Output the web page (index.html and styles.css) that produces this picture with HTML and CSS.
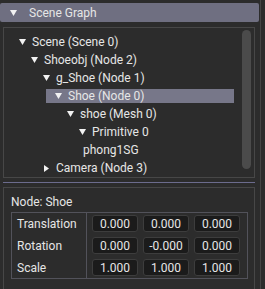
FILE: index.html
```html
<!DOCTYPE html>
<html lang="en">
<head>
<meta charset="UTF-8">
<title>Scene Graph</title>
<link rel="stylesheet" href="styles.css">
</head>
<body>
  <div class="panel">
    <div class="header">
      <svg class="arrow" width="7" height="6" viewBox="0 0 7 6"><polygon points="0,0 7,0 3.5,6"/></svg>
      <span>Scene Graph</span>
    </div>

    <!-- node tree -->
    <div class="tree">
      <ul class="nodes">
        <li>
          <div class="row"><svg class="arrow" width="7" height="6" viewBox="0 0 7 6"><polygon points="0,0 7,0 3.5,6"/></svg>Scene (Scene 0)</div>
          <ul>
            <li>
              <div class="row"><svg class="arrow" width="7" height="6" viewBox="0 0 7 6"><polygon points="0,0 7,0 3.5,6"/></svg>Shoeobj (Node 2)</div>
              <ul>
                <li>
                  <div class="row"><svg class="arrow" width="7" height="6" viewBox="0 0 7 6"><polygon points="0,0 7,0 3.5,6"/></svg>g_Shoe (Node 1)</div>
                  <ul>
                    <li>
                      <div class="row selected"><svg class="arrow" width="7" height="6" viewBox="0 0 7 6"><polygon points="0,0 7,0 3.5,6"/></svg>Shoe (Node 0)</div>
                      <ul>
                        <li>
                          <div class="row"><svg class="arrow" width="7" height="6" viewBox="0 0 7 6"><polygon points="0,0 7,0 3.5,6"/></svg>shoe (Mesh 0)</div>
                          <ul>
                            <li>
                              <div class="row"><svg class="arrow" width="7" height="6" viewBox="0 0 7 6"><polygon points="0,0 7,0 3.5,6"/></svg>Primitive 0</div>
                              <ul>
                                <li><div class="row leaf">phong1SG</div></li>
                              </ul>
                            </li>
                          </ul>
                        </li>
                      </ul>
                    </li>
                  </ul>
                </li>
                <li>
                  <div class="row"><svg class="arrow closed" width="7" height="7" viewBox="0 0 7 7"><polygon points="1,0 6,3.5 1,7"/></svg>Camera (Node 3)</div>
                </li>
              </ul>
            </li>
          </ul>
        </li>
      </ul>
      <div class="scroll"><div class="thumb"></div></div>
    </div>

    <div class="separator"></div>

    <!-- selected node properties -->
    <div class="props">
      <div class="title">Node: Shoe</div>
      <div class="table">
        <div class="labels">
          <div class="label">Translation</div>
          <div class="label">Rotation</div>
          <div class="label">Scale</div>
        </div>
        <div class="values">
          <div class="field">0.000</div>
          <div class="field">0.000</div>
          <div class="field">0.000</div>
          <div class="field">0.000</div>
          <div class="field">-0.000</div>
          <div class="field">0.000</div>
          <div class="field">1.000</div>
          <div class="field">1.000</div>
          <div class="field">1.000</div>
        </div>
      </div>
    </div>
  </div>
</body>
</html>
```

FILE: styles.css
```css
body {
  margin: 0;
  background-color: #2c2c2c;
  font-family: Roboto, "Liberation Sans", sans-serif;
  font-size: 12px;
  line-height: 14px;
  color: #e6e6e6;
}
.panel {
  width: 261px;
  height: 289px;
  padding-top: 3px;
  box-sizing: border-box;
  border-right: 1px solid #454545;
  overflow: hidden;
}
.arrow {
  fill: #f2f2f2;
  flex: none;
}
.header {
  display: flex;
  align-items: center;
  width: 259px;
  height: 19px;
  padding-left: 10px;
  box-sizing: border-box;
  background-color: #6f6f81;
  border-radius: 2px;
}
.header .arrow {
  margin-right: 12px;
}
.tree {
  display: flex;
  margin: 5px 0 0 3px;
  width: 252px;
  height: 151px;
  box-sizing: border-box;
  border: 1px solid #474747;
}
.nodes {
  flex: 1;
  padding: 7px 7px 0 6px;
}
.tree ul {
  list-style: none;
  margin: 0;
}
.tree ul ul {
  padding-left: 12px;
}
.row {
  display: flex;
  align-items: center;
  height: 14px;
  margin-bottom: 4px;
  padding-left: 9px;
  white-space: nowrap;
}
.row .arrow {
  margin-right: 6px;
}
.row.selected {
  background-color: #777789;
}
.row.leaf {
  padding-left: 1px;
}
.scroll {
  width: 13px;
  padding: 2px 3px 7px 1px;
  box-sizing: border-box;
}
.thumb {
  height: 139px;
  background-color: #4b4b4b;
  border-radius: 5px;
}
.separator {
  margin: 4px 0 4px 3px;
  width: 252px;
  height: 1px;
  background-color: #6c6c8e;
}
.props {
  margin-left: 3px;
  width: 252px;
  height: 110px;
  padding: 7px 6px 0 7px;
  box-sizing: border-box;
  border: 1px solid #474747;
}
.title {
  height: 14px;
  margin-bottom: 3px;
}
.table {
  display: flex;
  border: 1px solid #52525a;
}
.labels {
  width: 75px;
  padding: 2px 0 2px 5px;
  box-sizing: border-box;
  border-right: 1px solid #52525a;
  display: grid;
  grid-template-rows: repeat(3, 17px);
  row-gap: 5px;
  align-items: center;
}
.values {
  flex: 1;
  padding: 2px 6px 2px 5px;
  display: grid;
  grid-template-columns: repeat(3, 46px);
  grid-template-rows: repeat(3, 17px);
  gap: 5px;
}
.field {
  display: flex;
  align-items: center;
  justify-content: center;
  background-color: #1b1b1b;
  border: 1px solid #3d3d3d;
  border-radius: 3px;
  box-sizing: border-box;
}
```
